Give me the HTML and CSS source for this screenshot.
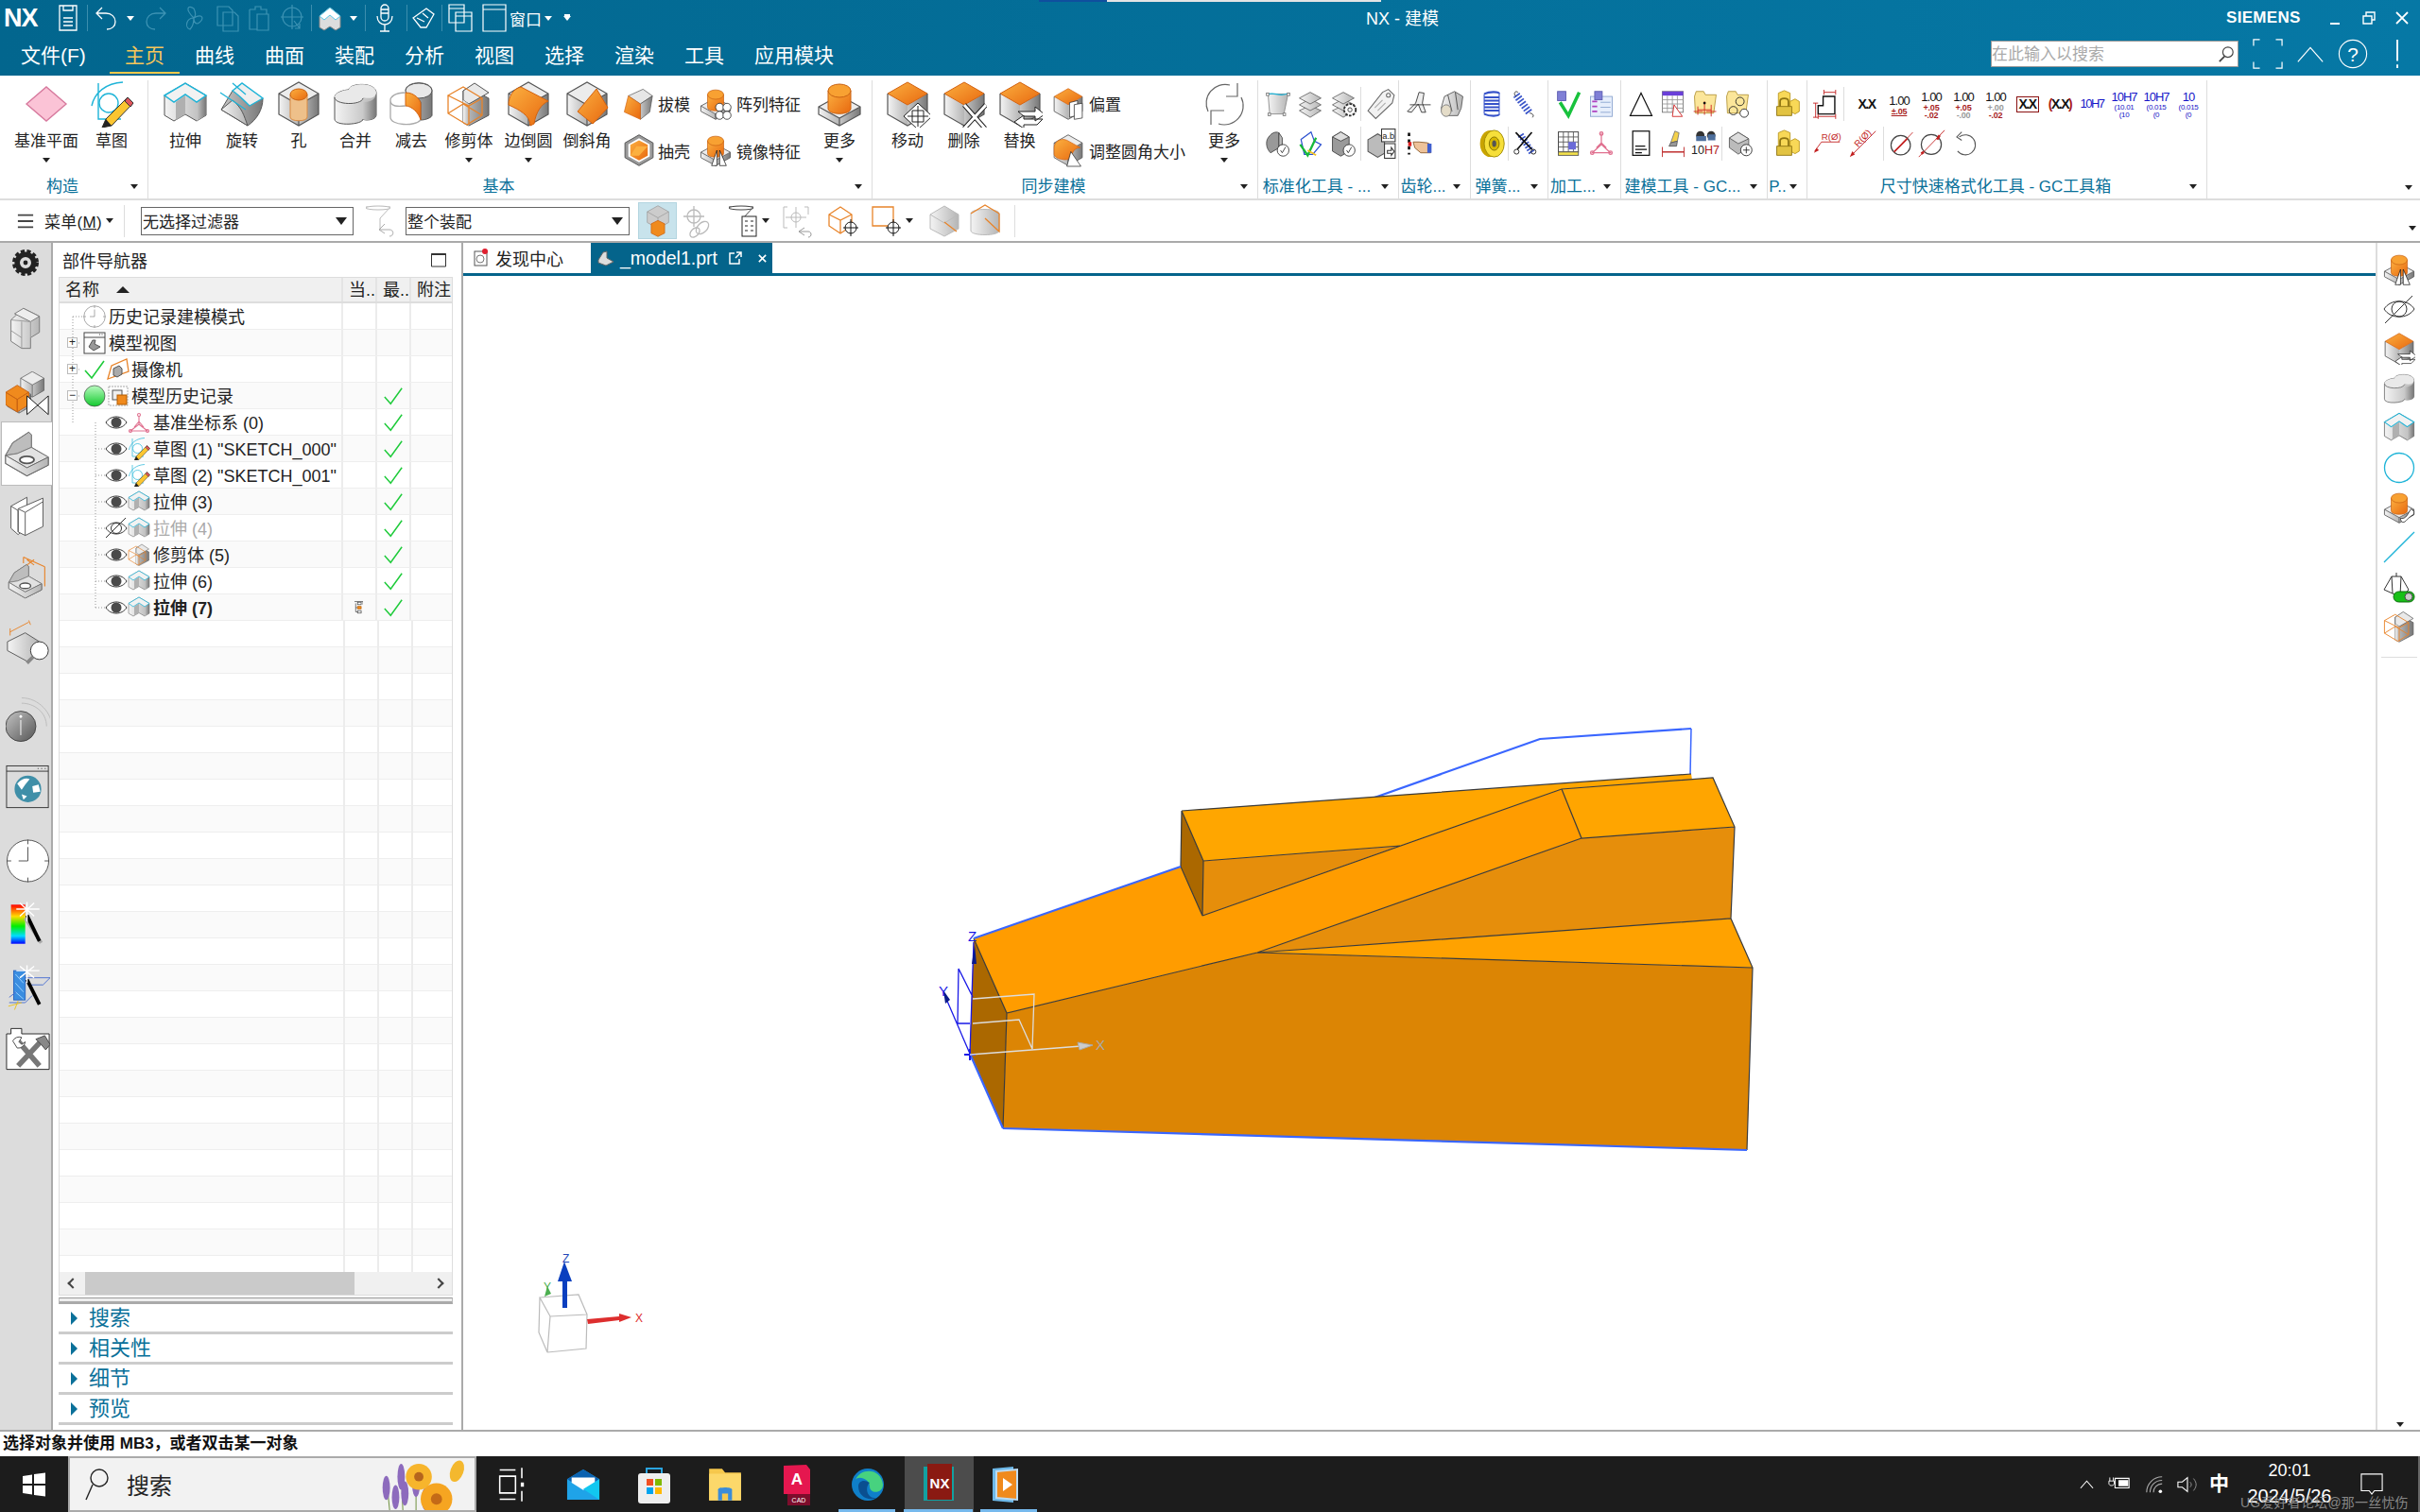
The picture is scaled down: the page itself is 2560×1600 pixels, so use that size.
FILE: index.html
```html
<!DOCTYPE html>
<html lang="zh">
<head>
<meta charset="utf-8">
<title>NX - 建模</title>
<link rel="stylesheet" href="styles.css">
</head>
<body>
<svg class="defs" aria-hidden="true">
<defs>
<linearGradient id="gA" x1="0" x2="1" y1="0" y2="0"><stop offset="0" stop-color="#f4f4f4"/><stop offset="1" stop-color="#b5b5b5"/></linearGradient>
<linearGradient id="gB" x1="0" x2="1" y1="0" y2="0"><stop offset="0" stop-color="#c8c8c8"/><stop offset="1" stop-color="#777"/></linearGradient>
<linearGradient id="gO" x1="0" x2="1" y1="0" y2="1"><stop offset="0" stop-color="#fbb040"/><stop offset="1" stop-color="#e8680f"/></linearGradient>
<linearGradient id="gBall" x1="0" x2="0" y1="0" y2="1"><stop offset="0" stop-color="#b9fbc0"/><stop offset="1" stop-color="#12c92e"/></linearGradient>
<linearGradient id="gInfo" x1="0" x2="1" y1="0" y2="1"><stop offset="0" stop-color="#c4c4c4"/><stop offset="1" stop-color="#555"/></linearGradient>
<linearGradient id="gRain" x1="0" x2="0" y1="0" y2="1"><stop offset="0" stop-color="#f00"/><stop offset=".3" stop-color="#fd0"/><stop offset=".55" stop-color="#0e0"/><stop offset=".8" stop-color="#0df"/><stop offset="1" stop-color="#00f"/></linearGradient>

<symbol id="cube" viewBox="0 0 48 48"><path d="M3 13 24 25V47L3 35z" fill="url(#gA)"/><path d="M45 13 24 25V47L45 35z" fill="url(#gB)"/><path d="M3 13 24 1 45 13 24 25z" fill="#ececec"/><path d="M3 13 24 1 45 13V35L24 47 3 35zM3 13 24 25 45 13M24 25V47" fill="none" stroke="#555" stroke-width="1.2"/></symbol>
<symbol id="ocube" viewBox="0 0 48 48"><path d="M3 13 24 25V47L3 35z" fill="url(#gA)"/><path d="M45 13 24 25V47L45 35z" fill="url(#gB)"/><path d="M3 13 24 1 45 13 24 25z" fill="url(#gO)" stroke="#d4620f"/><path d="M3 13V35L24 47 45 35V13" fill="none" stroke="#555" stroke-width="1.2"/></symbol>
<symbol id="pad" viewBox="0 0 48 48"><path d="M2 27 24 39V47L2 35z" fill="url(#gA)"/><path d="M46 27 24 39V47L46 35z" fill="url(#gB)"/><path d="M2 27 24 15 46 27 24 39z" fill="#ececec"/><path d="M2 27 24 15 46 27V35L24 47 2 35zM2 27 24 39 46 27M24 39V47" fill="none" stroke="#555" stroke-width="1.2"/><path d="M12 10V29C12 36 36 36 36 29V10z" fill="url(#gO)" stroke="#c96212"/><ellipse cx="24" cy="10" rx="12" ry="7" fill="#f8a132" stroke="#c96212"/></symbol>
<symbol id="datum" viewBox="0 0 48 48"><path d="M3 24 24 6 45 24 24 42z" fill="#fbc3d6" stroke="#d77a9e" stroke-width="1.4"/></symbol>
<symbol id="sketch" viewBox="0 0 48 48"><path d="M3 26C6 12 18 2 36 1M10 2V40H34" fill="none" stroke="#1fb4d8" stroke-width="1.4"/><circle cx="21" cy="23" r="10" fill="#fff" stroke="#1fb4d8" stroke-width="1.4"/><path d="M41 17 47 23 24 47 14 49 18 40z" fill="#fbc531" stroke="#333"/><path d="M41 17 47 23 44 27 38 21z" fill="#e0555c" stroke="#333"/><path d="M18 40 14 49 24 47z" fill="#222"/></symbol>
<symbol id="extrude" viewBox="0 0 48 48"><path d="M2 15V36L12 42 24 35 36 42 46 36V15L24 2z" fill="url(#gA)" stroke="#555"/><path d="M36 22 46 15V36L36 42z" fill="url(#gB)"/><path d="M14 22 24 15V35L14 41z" fill="#b0b0b0"/><path d="M2 15 24 2 46 15 36 22 24 14 12 22z" fill="#f2f2f2" stroke="#1fb4d8" stroke-width="1.5"/></symbol>
<symbol id="revolve" viewBox="0 0 48 48"><path d="M2 30 14 10C22 15 38 20 46 18 46 30 40 40 30 47z" fill="url(#gB)" stroke="#555"/><path d="M2 30 30 47C26 36 24 28 14 20z" fill="url(#gA)" stroke="#555"/><path d="M14 10 24 2 46 18 32 26C26 20 20 14 14 10z" fill="#efefef" stroke="#1fb4d8" stroke-width="1.4"/><path d="M1 12 28 30M14 2 28 14" stroke="#1fb4d8" stroke-width="1.3" fill="none"/></symbol>
<symbol id="hole" viewBox="0 0 48 48"><use href="#cube"/><path d="M15 14V38C15 43 33 43 33 38V14z" fill="#eec08a" stroke="#d98a40"/><ellipse cx="24" cy="14" rx="9" ry="6" fill="url(#gO)" stroke="#c96212"/></symbol>
<symbol id="unite" viewBox="0 0 48 48"><path d="M17 9C17 2 45 0 46 12V36C46 41 34 42 32 40 32 46 2 48 2 40V17C2 12 12 9 17 9z" fill="url(#gA)" stroke="#555"/><path d="M32 40V22C44 22 46 16 46 12V36C46 41 34 42 32 40z" fill="url(#gB)"/><path d="M2 17C2 27 32 27 32 17 44 20 46 14 46 12 45 0 17 2 17 9 12 9 2 12 2 17z" fill="#e9e9e9" stroke="none"/><path d="M2 17C2 25 30 26 32 18" fill="none" stroke="#555"/></symbol>
<symbol id="subtract" viewBox="0 0 48 48"><path d="M18 10C18 -1 46 -1 46 10V36C46 38 40 41 34 41V22C30 14 18 12 18 10z" fill="url(#gB)" stroke="#555"/><ellipse cx="32" cy="10" rx="14" ry="8" fill="#e8e8e8" stroke="#555"/><path d="M18 12C28 12 34 20 34 24V41C32 33 24 26 18 26z" fill="url(#gO)" stroke="#d4620f"/><path d="M18 12C6 12 2 17 2 20V38C2 47 28 48 34 41M2 20C2 27 10 27 18 26" fill="none" stroke="#aaa" stroke-width="1.3"/></symbol>
<symbol id="trim" viewBox="0 0 48 48"><path d="M18 10 24 7 45 18V36L24 47 18 44z" fill="url(#gB)" stroke="#555"/><path d="M18 10 30 2 45 12 24 24 18 20z" fill="#e9e9e9" stroke="#555"/><path d="M18 20 24 24V47L18 44z" fill="url(#gA)"/><path d="M2 15 18 6 38 18 24 26zM2 15V34L22 46 38 36V18M24 26V46M2 34 18 24 38 36" fill="none" stroke="#e8842a" stroke-width="1.3"/></symbol>
<symbol id="blend" viewBox="0 0 48 48"><use href="#cube"/><path d="M3 25C3 16 8 8 16 6L45 21C38 24 32 32 30 45L26 47C26 36 14 30 3 25z" fill="url(#gO)" stroke="#d4620f"/></symbol>
<symbol id="chamfer" viewBox="0 0 48 48"><use href="#cube"/><path d="M14 32 34 8 46 28 30 45z" fill="url(#gO)" stroke="#d4620f"/></symbol>
<symbol id="draft" viewBox="0 0 48 48"><path d="M8 12 30 2 44 12 26 24z" fill="#e6e6e6" stroke="#555"/><path d="M26 24 44 12 40 36 26 47z" fill="url(#gB)" stroke="#555"/><path d="M8 12 26 24 26 47 2 36z" fill="url(#gO)" stroke="#d4620f"/></symbol>
<symbol id="shell" viewBox="0 0 48 48"><path d="M24 1 45 13V35L24 47 3 35V13z" fill="#999" stroke="#555" stroke-width="1.4"/><path d="M24 6 40 15V33L24 42 8 33V15z" fill="#fff"/><path d="M24 9 37 16V32L24 39 11 32V16z" fill="url(#gO)"/><path d="M20 18H37L24 32 11 32z" fill="#fbb040"/></symbol>
<symbol id="pattern" viewBox="0 0 48 48"><use href="#pad"/><g fill="#fff" stroke="#111"><circle cx="30" cy="29" r="6"/><circle cx="41" cy="29" r="6"/><circle cx="30" cy="41" r="6"/><circle cx="41" cy="41" r="6"/></g></symbol>
<symbol id="mirror" viewBox="0 0 48 48"><use href="#pad"/><path d="M26 24 26 47H18zM30 24V47H40z" fill="#fff" stroke="#111"/></symbol>
<symbol id="move" viewBox="0 0 48 48"><use href="#ocube"/><path d="M35 23 50 37 35 51 20 37z" fill="#fff" stroke="#222"/><path d="M35 26V48M24 37H46M29 31H41V43H29z" stroke="#222" fill="none"/></symbol>
<symbol id="del" viewBox="0 0 48 48"><use href="#ocube"/><path d="M24 25 46 50M47 25 24 50" stroke="#222" stroke-width="5"/><path d="M24 25 46 50M47 25 24 50" stroke="#fff" stroke-width="3"/></symbol>
<symbol id="replace" viewBox="0 0 48 48"><use href="#ocube"/><path d="M22 32H40V27L50 35 40 42V37H28zM48 40H28V36L18 43 28 50V46H42z" fill="#fff" stroke="#222"/></symbol>
<symbol id="offset" viewBox="0 0 48 48"><use href="#ocube"/><path d="M26 22 38 19V41L26 44z" fill="#fff" stroke="#222"/><path d="M33 25 45 23V45L33 47z" fill="#fff" stroke="#222"/></symbol>
<symbol id="resize" viewBox="0 0 48 48"><use href="#cube"/><path d="M3 20C3 12 12 5 22 9L42 20C34 20 30 26 28 36 22 40 4 38 3 30z" fill="url(#gO)" stroke="#d4620f"/><path d="M28 26 43 48H22z" fill="#fff" stroke="#222"/></symbol>
<symbol id="sync" viewBox="0 0 48 48"><path d="M7 32A20 20 0 0 1 30 4M42 17A20 20 0 0 1 18 45" fill="none" stroke="#666" stroke-width="1.2"/><path d="M38 2V16H26M10 46V31H24" fill="none" stroke="#666" stroke-width="1.2"/></symbol>
<symbol id="filt" viewBox="0 0 34 34"><path d="M2 2H28L17 14V26" fill="none" stroke="#bbb"/><ellipse cx="15" cy="3" rx="13" ry="2" fill="#fff" stroke="#bbb"/><path d="M22 20 16 26 22 30M16 26H27C32 26 32 33 27 33" fill="none" stroke="#aaa"/></symbol>

<symbol id="surf" viewBox="0 0 34 34"><path d="M5 5H29L24 29 7 29z" fill="url(#gA)" stroke="#888"/><path d="M4 6C12 1 18 10 30 4" fill="none" stroke="#1fb4d8" stroke-width="1.4"/><g fill="#fff" stroke="#777"><rect x="3" y="4" width="3" height="3"/><rect x="28" y="4" width="3" height="3"/><rect x="5" y="28" width="3" height="3"/><rect x="23" y="28" width="3" height="3"/></g></symbol>
<symbol id="layers" viewBox="0 0 34 34"><g fill="url(#gA)" stroke="#666"><path d="M17 19 30 25 17 33 4 25z"/><path d="M17 11 30 18 17 25 4 18z"/><path d="M17 3 30 10 17 17 4 10z"/></g></symbol>
<symbol id="lgear" viewBox="0 0 34 34"><use href="#layers"/><circle cx="25" cy="24" r="7" fill="#fff" stroke="#333" stroke-width="2.2" stroke-dasharray="3 1.5"/><circle cx="25" cy="24" r="2.5" fill="#fff" stroke="#333"/></symbol>
<symbol id="tag" viewBox="0 0 34 34"><path d="M24 2 30 8 28 16 11 32 3 24 18 5z" fill="#f2f2f2" stroke="#666"/><circle cx="24" cy="8" r="2" fill="#fff" stroke="#666"/><path d="M10 21 18 13M13 24 21 16" stroke="#aaa"/></symbol>
<symbol id="pcheck" viewBox="0 0 34 34"><path d="M4 12C8 4 14 2 18 4V22L8 28C4 24 2 18 4 12z" fill="#999" stroke="#444"/><path d="M18 4 22 10V20L18 22z" fill="#bbb" stroke="#444"/><circle cx="23" cy="25" r="7" fill="#fff" stroke="#333"/><path d="M20 25 22 28 26 21" fill="none" stroke="#333"/></symbol>
<symbol id="flag3" viewBox="0 0 34 34"><path d="M6 12 18 3 22 14 30 18 20 30 10 30z" fill="#fff" stroke="#2a4fcf" stroke-width="1.4"/><path d="M5 18 14 31 24 10" fill="none" stroke="#17b93a" stroke-width="2.6"/><path d="M14 25 24 31" stroke="#f0c020" stroke-width="2"/></symbol>
<symbol id="ccheck" viewBox="0 0 34 34"><path d="M4 9 14 3 24 9V26L14 32 4 26z" fill="#9a9a9a" stroke="#444"/><path d="M4 9 14 14 24 9 14 3z" fill="#ddd" stroke="#444"/><circle cx="24" cy="25" r="7" fill="#fff" stroke="#333"/><path d="M21 25 23 28 27 21" fill="none" stroke="#333"/></symbol>
<symbol id="abdoc" viewBox="0 0 34 34"><path d="M3 13 13 7 20 11V27L13 31 3 25z" fill="#bbb" stroke="#555"/><rect x="17" y="2" width="14" height="13" fill="#fff" stroke="#333"/><text x="24" y="12" font-size="9" text-anchor="middle" fill="#222" font-family="Liberation Sans">a.b</text><rect x="20" y="17" width="11" height="15" fill="#fff" stroke="#333"/><path d="M23 24H27V21L30 25 27 29V27H23z" fill="#fff" stroke="#333"/></symbol>
<symbol id="gear1" viewBox="0 0 34 34"><path d="M2 26 12 16 16 3 22 4 20 16 24 27H19L15 17 7 27z" fill="#eee" stroke="#333"/><path d="M5 18H30" stroke="#333"/></symbol>
<symbol id="gear2" viewBox="0 0 34 34"><path d="M8 8 20 2 30 8 28 22 24 31H8L4 22z" fill="url(#gA)" stroke="#555"/><path d="M12 6 17 26M21 3 24 24" stroke="#444"/><ellipse cx="10" cy="25" rx="6" ry="7" fill="#e4dcc8" stroke="#777"/></symbol>
<symbol id="hand" viewBox="0 0 34 34"><path d="M4 4V30" stroke="#111" stroke-width="3" stroke-dasharray="4 4"/><path d="M9 15 H16 L26 16 30 18V28H18L11 22z" fill="#eec39a" stroke="#8a5a2a"/><rect x="26" y="17" width="5" height="11" fill="#3f5fcf"/><rect x="3" y="15" width="4" height="5" fill="#e02020"/></symbol>
<symbol id="spring1" viewBox="0 0 34 34"><g fill="none" stroke="#3551c9" stroke-width="2.4"><path d="M8 5C14 2 26 2 26 5M8 9H26M8 13H26M8 17H26M8 21H26M8 25H26M8 29C14 32 26 32 26 29"/><path d="M8 5V29M26 5V29" stroke-width="1.2"/></g></symbol>
<symbol id="spring2" viewBox="0 0 34 34"><path d="M8 6 24 28" fill="none" stroke="#3a55c9" stroke-width="9" stroke-dasharray="2 2"/><path d="M10 3C6 0 4 6 8 8M24 28C28 28 30 32 27 33" fill="none" stroke="#333"/></symbol>
<symbol id="washer" viewBox="0 0 34 34"><ellipse cx="15" cy="17" rx="12" ry="16" fill="#c9a400"/><ellipse cx="20" cy="17" rx="12" ry="16" fill="#f6df3a" stroke="#9b8500"/><ellipse cx="20" cy="17" rx="6" ry="8" fill="#d7b800" stroke="#7b6a00"/><ellipse cx="20" cy="17" rx="2.5" ry="4" fill="#555"/></symbol>
<symbol id="scissor" viewBox="0 0 34 34"><path d="M10 6 24 28" fill="none" stroke="#3a55c9" stroke-width="8" stroke-dasharray="2 2"/><path d="M4 3 24 24M24 3 6 24" stroke="#111" stroke-width="2"/><circle cx="5" cy="27" r="3" fill="none" stroke="#111"/><circle cx="26" cy="27" r="3" fill="none" stroke="#111"/></symbol>
<symbol id="plugv" viewBox="0 0 34 34"><rect x="3" y="2" width="10" height="11" fill="#7f7fd6" stroke="#5a5ab0"/><path d="M6 15 16 31 29 3" fill="none" stroke="#18c23d" stroke-width="4"/></symbol>
<symbol id="plugl" viewBox="0 0 34 34"><rect x="4" y="8" width="26" height="24" fill="#e6eefb" stroke="#8aa4cf"/><rect x="9" y="2" width="9" height="10" fill="#7f7fd6" stroke="#5a5ab0"/><path d="M6 14H12M6 20H12M6 26H12" stroke="#b040c0" stroke-width="2"/><path d="M16 15H28M16 21H28M16 27H28" stroke="#8aa4cf"/></symbol>
<symbol id="gridp" viewBox="0 0 34 34"><rect x="4" y="3" width="24" height="24" fill="#fff" stroke="#333"/><path d="M4 9H28M4 15H28M4 21H28M10 3V27M16 3V27M22 3V27" stroke="#555"/><rect x="4" y="27" width="24" height="4" fill="#f4e24b" stroke="#555"/><rect x="16" y="15" width="9" height="9" fill="#6b6bd8"/></symbol>
<symbol id="csysp" viewBox="0 0 34 34"><g fill="none" stroke="#e0708f" stroke-width="1.4"><path d="M17 4V18L6 28H28L17 18M11 22 17 16 23 22"/><circle cx="17" cy="5" r="2"/><circle cx="6" cy="28" r="2"/><circle cx="28" cy="28" r="2"/></g></symbol>
<symbol id="tri" viewBox="0 0 34 34"><path d="M17 4 30 31H4z" fill="#fff" stroke="#111" stroke-width="1.4"/></symbol>
<symbol id="table" viewBox="0 0 34 34"><rect x="4" y="2" width="25" height="25" fill="#fff" stroke="#777"/><rect x="4" y="2" width="25" height="5" fill="#6a3fd8"/><path d="M4 12H29M4 17H29M4 22H29M10 7V27M16 7V27M22 7V27" stroke="#999"/><path d="M18 18 28 32H16z" fill="#fff" stroke="#d02020"/></symbol>
<symbol id="foldp" viewBox="0 0 34 34"><path d="M4 8 6 2H15L17 6H30L27 28H5z" fill="#fbe69a" stroke="#b3953a"/><path d="M8 24H24M16 14V30M24 18V32M18 26H30M8 20V30M3 26H14" stroke="#d02020"/><circle cx="16" cy="16" r="1.6" fill="#111"/></symbol>
<symbol id="foldc" viewBox="0 0 34 34"><path d="M4 8 6 2H15L17 6H30L27 28H5z" fill="#fbe69a" stroke="#b3953a"/><circle cx="12" cy="25" r="5" fill="none" stroke="#222"/><circle cx="25" cy="28" r="5" fill="#fff" stroke="#222"/><circle cx="20" cy="14" r="5" fill="none" stroke="#222"/></symbol>
<symbol id="doc" viewBox="0 0 34 34"><rect x="7" y="2" width="20" height="29" fill="#fff" stroke="#111" stroke-width="1.4"/><path d="M10 20H22M10 24H24M10 28H18" stroke="#111" stroke-width="1.4"/></symbol>
<symbol id="brush" viewBox="0 0 34 34"><path d="M19 2 24 4 22 14 14 16z" fill="#f4d14a" stroke="#777"/><path d="M14 16 22 14 21 20 12 20z" fill="#999" stroke="#555"/><path d="M4 27H30" stroke="#b22" stroke-width="1.6"/><path d="M4 21V33M30 21V33" stroke="#b22"/></symbol>
<symbol id="bino" viewBox="0 0 34 34"><circle cx="11" cy="7" r="5" fill="#333"/><circle cx="24" cy="7" r="5" fill="#333"/><path d="M6 8H18V14H6zM20 6H29V13H20z" fill="#4d6f9d"/><text x="0" y="30" font-size="15" font-family="Liberation Sans" fill="#222" textLength="34" lengthAdjust="spacingAndGlyphs">10<tspan fill="#b02020">H7</tspan></text></symbol>
<symbol id="cplus" viewBox="0 0 34 34"><path d="M4 10 15 3 28 11V22L15 30 4 22z" fill="#bbb" stroke="#555"/><path d="M4 10 15 17 28 11 15 3z" fill="#ddd" stroke="#555"/><circle cx="25" cy="25" r="7" fill="#fff" stroke="#222"/><path d="M25 21V29M21 25H29" stroke="#222"/></symbol>
<symbol id="lock" viewBox="0 0 34 34"><path d="M6 4 13 1 20 4V20L13 24 6 20z" fill="#f8d857" stroke="#b8961e"/><path d="M20 14 26 11 31 14V26L26 29 20 26z" fill="#f8d857" stroke="#b8961e"/><path d="M4 20H22V31H4z" fill="#e2c342" stroke="#8e7412"/><path d="M8 20V14C8 9 18 9 18 14V20" fill="none" stroke="#8e7412" stroke-width="2"/></symbol>
<symbol id="dimstep" viewBox="0 0 34 34"><path d="M12 8H26V29H6V19H12z" fill="#fff" stroke="#111" stroke-width="1.6"/><path d="M13 3H27M13 0V6M27 0V6M3 16V33M0 16H6M0 33H6M6 32H27M6 29V35M27 29V35" stroke="#c21f1f"/></symbol>
<symbol id="rdim" viewBox="0 0 34 34"><text x="10" y="13" font-size="11" fill="#c21f1f" font-family="Liberation Sans">R(Ø)</text><path d="M10 15H32M10 15 2 26" stroke="#c21f1f" fill="none"/><path d="M1 28 7 25 4 22z" fill="#c21f1f"/></symbol>
<symbol id="rdim2" viewBox="0 0 34 34"><path d="M32 2 2 32" stroke="#c21f1f"/><text x="9" y="21" font-size="11" fill="#c21f1f" font-family="Liberation Sans" transform="rotate(-48 11 19)">R(Ø)</text><path d="M1 33 7 30 4 26z" fill="#c21f1f"/></symbol>
<symbol id="dia1" viewBox="0 0 34 34"><circle cx="16" cy="19" r="12" fill="none" stroke="#444" stroke-width="1.4"/><path d="M31 3 8 27" stroke="#c21f1f"/><path d="M24 11 8 27" stroke="#c21f1f" stroke-width="2"/></symbol>
<symbol id="dia2" viewBox="0 0 34 34"><circle cx="17" cy="18" r="12" fill="none" stroke="#444" stroke-width="1.4"/><path d="M33 1 2 33" stroke="#c21f1f"/><path d="M27 7 24 12M8 27 5 29" stroke="#c21f1f" stroke-width="3"/></symbol>
<symbol id="undoc" viewBox="0 0 34 34"><path d="M10 7A12 12 0 1 1 8 24" fill="none" stroke="#555" stroke-width="1.2" transform="translate(2 2)"/><path d="M15 3 9 9 15 13" fill="none" stroke="#555" stroke-width="1.2"/></symbol>

<symbol id="eye" viewBox="0 0 24 24"><path d="M1 12C6 4 18 4 23 12 18 20 6 20 1 12z" fill="#fff" stroke="#333"/><circle cx="12" cy="12" r="5.5" fill="#4a4a4a"/></symbol>
<symbol id="eyeoff" viewBox="0 0 24 24"><path d="M1 12C6 4 18 4 23 12 18 20 6 20 1 12z" fill="#fff" stroke="#333"/><circle cx="12" cy="12" r="5.5" fill="none" stroke="#333"/><path d="M1 22 22 1" stroke="#333"/></symbol>
<symbol id="check" viewBox="0 0 24 24"><path d="M2 13 9 21 22 3" fill="none" stroke="#1ecb3a" stroke-width="1.6"/></symbol>
<symbol id="clock" viewBox="0 0 48 48"><circle cx="24" cy="24" r="22.5" fill="#fff" stroke="#555"/><path d="M24 1V6M24 42V47M1 24H6M42 24H47M24 9V24H14" fill="none" stroke="#555"/></symbol>
<symbol id="viewi" viewBox="0 0 24 24"><rect x="1" y="1" width="22" height="22" fill="#fff" stroke="#444"/><path d="M1 6H23" stroke="#444"/><path d="M17 3H18M19.500 3H20.500" stroke="#444"/><path d="M6 16 10 9 13 9 12 13 18 16 11 20z" fill="#999" stroke="#555"/></symbol>
<symbol id="cam" viewBox="0 0 24 24"><path d="M1 22 5 8 21 1 23 14z" fill="#fff" stroke="#e8842a" stroke-width="1.3"/><path d="M7 11 13 8 16 11V17L11 20 7 18z" fill="#aaa" stroke="#555"/></symbol>
<symbol id="ball" viewBox="0 0 24 24"><circle cx="12" cy="12" r="11" fill="url(#gBall)" stroke="#333" stroke-width=".6"/></symbol>
<symbol id="hist" viewBox="0 0 24 24"><rect x="2" y="2" width="20" height="20" fill="#fff" stroke="#aaa" stroke-dasharray="2 1"/><rect x="6" y="6" width="10" height="10" fill="#eee" stroke="#555"/><rect x="11" y="11" width="10" height="10" fill="#f08a1d" stroke="#b35c00"/></symbol>
<symbol id="csys" viewBox="0 0 24 24"><g fill="none" stroke="#e0708f" stroke-width="1.1"><path d="M12 5V14L3 21H21L12 14M7 17 12 11 17 17"/><circle cx="12" cy="4" r="1.500"/><circle cx="3" cy="21" r="1.500"/><circle cx="21" cy="21" r="1.500"/></g></symbol>
<symbol id="tsk" viewBox="0 0 14 24"><path d="M0 2H14V7M2 5V19H5M5 12H2" fill="none" stroke="#333"/><rect x="5" y="3" width="6" height="4" fill="#fff" stroke="#333"/><rect x="5" y="10" width="6" height="4" fill="#f08a1d" stroke="#b35c00"/><rect x="5" y="17" width="6" height="4" fill="#fff" stroke="#333"/></symbol>

<symbol id="gearl" viewBox="0 0 50 50"><circle cx="25" cy="25" r="11" fill="none" stroke="#222" stroke-width="7"/><circle cx="25" cy="25" r="15" fill="none" stroke="#222" stroke-width="5" stroke-dasharray="5 3"/><circle cx="25" cy="25" r="3" fill="#222"/></symbol>
<symbol id="blocks" viewBox="0 0 50 50"><path d="M20 3 38 12V30L28 36V48L18 48 6 40V16z" fill="url(#gA)" stroke="#777"/><path d="M20 3 38 12 28 18 10 9z" fill="#eee" stroke="#777"/><path d="M28 18V36M28 18 6 16M6 28 18 36M18 18V48" fill="none" stroke="#999"/></symbol>
<symbol id="assem" viewBox="0 0 50 50"><use href="#cube" x="15" y="-2" width="30" height="30"/><use href="#cube" x="0" y="16" width="30" height="30"/><path d="M0 22 13 14 26 22 13 30z" fill="#f08a1d" stroke="#c96212"/><path d="M0 22 13 30V44L0 36zM26 22 13 30V44L26 36z" fill="#f08a1d" stroke="#c96212"/><path d="M24 26 48 47V26L24 47z" fill="#fff" stroke="#111"/></symbol>
<symbol id="bracket" viewBox="0 0 50 52"><path d="M1 28 9 14 27 2 30 5V19L49 30V39L25 51 1 37z" fill="#c8c8c8" stroke="#666" stroke-width="1.200"/><path d="M1 28 9 14 27 2 30 5V19L14 26z" fill="#bdbdbd" stroke="#777"/><path d="M1 28 14 26 30 19 49 30 25 42z" fill="#e2e2e2" stroke="#777"/><path d="M1 28 25 42 49 30V39L25 51 1 37z" fill="url(#gA)" stroke="#666"/><ellipse cx="25" cy="33" rx="8" ry="4" fill="#fff" stroke="#555" stroke-width="2"/></symbol>
<symbol id="books" viewBox="0 0 50 50"><path d="M6 15 24 5V38L14 47 6 40z" fill="#fff" stroke="#555"/><path d="M14 18 42 6V38L22 48 14 44z" fill="#fff" stroke="#555"/><path d="M6 15 14 20V44M14 18 22 22V48M22 22 42 10" fill="none" stroke="#555"/></symbol>
<symbol id="bracketd" viewBox="0 0 50 50"><use href="#bracket" x="2" y="8" width="40" height="40"/><path d="M16 1 40 12M40 12V34M16 1V8M20 4 28 10M28 4 20 10" fill="none" stroke="#e8842a" stroke-width="1.2" transform="translate(4 0)"/></symbol>
<symbol id="brmag" viewBox="0 0 50 50"><path d="M2 24 22 14 38 24V34L24 46 2 34z" fill="url(#gA)" stroke="#555"/><path d="M5 13 26 2M5 9V17M26 0 28 5" stroke="#e8842a" fill="none"/><circle cx="38" cy="34" r="10" fill="#fff" stroke="#333"/><path d="M31 41 24 48" stroke="#888" stroke-width="4"/></symbol>
<symbol id="info" viewBox="0 0 50 50"><circle cx="17" cy="32" r="17" fill="url(#gInfo)" stroke="#444"/><circle cx="17" cy="21" r="1.500" fill="#fff"/><path d="M17 25V42" stroke="#fff"/><path d="M18 6C32 6 46 16 46 32M18 0C38 0 52 18 52 32" fill="none" stroke="#bbb"/></symbol>
<symbol id="globe" viewBox="0 0 50 50"><rect x="1" y="1" width="47" height="47" fill="none" stroke="#333"/><path d="M1 7H48M36 4H37M40 4H41M44 4H45" stroke="#333"/><circle cx="25" cy="27" r="15" fill="#3f8fa8"/><path d="M13 21C18 15 24 14 27 16L22 22 18 28zM30 24 37 22 39 30 31 31zM18 33 24 35 20 39z" fill="#fff"/></symbol>
<symbol id="rainbow" viewBox="0 0 50 50"><rect x="6" y="3" width="16" height="44" fill="url(#gRain)"/><path d="M22 18 40 46" stroke="#aaa" stroke-width="4"/><path d="M24 15 38 44" stroke="#000" stroke-width="4"/><path d="M12 8H38M24 0V22M16 1 32 16M32 1 16 16" stroke="#fff" stroke-width="1.5"/></symbol>
<symbol id="wand" viewBox="0 0 50 50"><rect x="9" y="6" width="13" height="33" fill="#3a8de0" stroke="#2a66c0"/><path d="M11 10 20 20M11 20 20 30M11 30 20 38" stroke="#9fd4ff"/><path d="M22 14H50L42 22H26M4 36 12 30M4 42H22L30 34" fill="none" stroke="#4a6fd0"/><path d="M3 46 18 42M10 50 14 40" stroke="#e8c020"/><path d="M24 16 38 44" stroke="#000" stroke-width="4"/><path d="M12 6H38M24 0V20M16 1 32 14M32 1 16 14" stroke="#fff" stroke-width="1.5"/></symbol>
<symbol id="tools" viewBox="0 0 50 50"><path d="M1 48V8H6V2H18V8H49V48z" fill="#fff" stroke="#222"/><path d="M12 14 38 44M42 14 14 44" stroke="#777" stroke-width="6"/><path d="M8 16A8 8 0 0 1 18 12L15 17 18 20 22 17A8 8 0 0 1 13 24z" fill="#fff" stroke="#444"/><path d="M34 14 44 10 50 20 45 26 40 20z" fill="#888" stroke="#444"/></symbol>
<symbol id="orcube2" viewBox="0 0 48 48"><path d="M8 10 24 1 40 10V26L24 35 8 26z" fill="#ccc" stroke="#999"/><path d="M8 10 24 19 40 10M24 19V35" fill="none" stroke="#999"/><path d="M14 28 24 23 34 28V42L24 47 14 42z" fill="#f08a1d" stroke="#c96212"/></symbol>
</defs>
</svg>

<div class="app">
  <header class="top">
    <div class="top-strip"><i class="s1"></i><i class="s2"></i></div>
    <div class="title-row">
      <span class="nx">NX</span>
      <svg class="q q1" viewBox="0 0 24 28"><path d="M3 1H21V27H3zM7 1H17V6H7zM7 14H17M7 18H17M7 22H17" fill="none" stroke="#fff" stroke-width="1.3"/></svg>
      <i class="qs"></i>
      <svg class="q q2" viewBox="0 0 24 28"><path d="M8 3 2 9 8 15M2 9H12C18 9 22 13 22 18S18 26 13 26" fill="none" stroke="#fff" stroke-width="1.3"/></svg>
      <span class="car q3"></span>
      <svg class="q q4" viewBox="0 0 24 28"><path d="M16 3 22 9 16 15M22 9H12C6 9 2 13 2 18S6 26 11 26" fill="none" stroke="#3d93b4" stroke-width="1.3"/></svg>
      <svg class="q q5" viewBox="0 0 24 28"><path d="M12 14C2 4 6 0 12 4 14 8 14 12 12 14ZM12 14C22 8 24 16 16 20 12 20 12 16 12 14ZM12 14C4 14 2 24 8 26 12 22 12 18 12 14Z" fill="none" stroke="#3d93b4" stroke-width="1.2"/></svg>
      <svg class="q q6" viewBox="0 0 24 28"><path d="M2 2H14L18 6V22H2zM8 8H20L24 12V28H8z" fill="none" stroke="#3d93b4" stroke-width="1.2"/></svg>
      <svg class="q q7" viewBox="0 0 24 28"><path d="M2 5H8V2H14V5H20V10M2 5V26H10M10 10H22V27H10z" fill="none" stroke="#3d93b4" stroke-width="1.2"/></svg>
      <svg class="q q8" viewBox="0 0 24 28"><circle cx="12" cy="13" r="10" fill="none" stroke="#3d93b4" stroke-width="1.2"/><path d="M12 0V26M0 13H24M14 17 20 25M20 20V25H15" fill="none" stroke="#3d93b4" stroke-width="1.2"/></svg>
      <i class="qs qs2"></i>
      <svg class="q q9" viewBox="0 0 26 28"><path d="M2 12 13 3 24 12V24L19 27 13 23 7 27 2 24z" fill="#ddd" stroke="#888"/><path d="M2 12 13 3 24 12 19 16 13 11 7 16z" fill="#fff" stroke="#5ac8e8"/></svg>
      <span class="car q10"></span>
      <i class="qs qs3"></i>
      <svg class="q q11" viewBox="0 0 24 30"><rect x="8" y="1" width="8" height="17" rx="4" fill="none" stroke="#fff" stroke-width="1.3"/><path d="M8 6H16M8 10H16M4 13C4 25 20 25 20 13M12 22V29M7 29H17" fill="none" stroke="#fff" stroke-width="1.3"/></svg>
      <i class="qs qs4"></i>
      <svg class="q q12" viewBox="0 0 26 28"><path d="M2 14 16 4 24 10 16 24 10 24zM6 14 14 18M12 9 18 14" fill="none" stroke="#fff" stroke-width="1.3"/></svg>
      <i class="qs qs5"></i>
      <svg class="q q13" viewBox="0 0 26 30"><path d="M1 1H17V20H1zM1 5H17M8 9H25V29H8zM8 13H25" fill="#046f98" stroke="#fff" stroke-width="1.2"/></svg>
      <svg class="q q14" viewBox="0 0 26 30"><path d="M1 1H25V29H1zM1 6H25" fill="none" stroke="#fff" stroke-width="1.2"/></svg>
      <span class="qtext">窗口</span>
      <span class="car q15"></span>
      <span class="car car-line q16"></span>
      <span class="apptitle">NX - 建模</span>
      <span class="siemens">SIEMENS</span>
      <span class="winbtns">
        <svg viewBox="0 0 16 16"><path d="M2 14H12" stroke="#fff" stroke-width="2"/></svg>
        <svg viewBox="0 0 16 16"><path d="M2 6H11V14H2zM5 6V2H14V10H11" fill="none" stroke="#fff" stroke-width="1.400"/></svg>
        <svg viewBox="0 0 16 16"><path d="M2 2 14 14M14 2 2 14" stroke="#fff" stroke-width="1.800"/></svg>
      </span>
    </div>
    <nav class="menu-row">
      <a class="mi file">文件(F)</a>
      <a class="mi active">主页</a>
      <a class="mi">曲线</a><a class="mi">曲面</a><a class="mi">装配</a><a class="mi">分析</a><a class="mi">视图</a><a class="mi">选择</a><a class="mi">渲染</a><a class="mi">工具</a><a class="mi">应用模块</a>
      <div class="search">
        <span class="ph">在此输入以搜索</span>
        <svg class="mag" viewBox="0 0 20 20"><circle cx="12" cy="8" r="6" fill="none" stroke="#444" stroke-width="1.300"/><path d="M8 13 2 19" stroke="#444" stroke-width="2"/></svg>
      </div>
      <svg class="tb b1" viewBox="0 0 34 34"><path d="M1 8V1H8M26 1H33V8M33 26V33H26M8 33H1V26" fill="none" stroke="#fff" stroke-width="1.300"/></svg>
      <svg class="tb b2" viewBox="0 0 34 34"><path d="M3 26 17 10 31 26" fill="none" stroke="#fff" stroke-width="1.300"/></svg>
      <svg class="tb b3" viewBox="0 0 34 34"><circle cx="17" cy="17" r="15.500" fill="none" stroke="#fff" stroke-width="1.200"/><text x="17" y="25" font-size="22" text-anchor="middle" fill="#fff" font-family="Liberation Sans">?</text></svg>
      <svg class="tb b4" viewBox="0 0 34 34"><path d="M17 1V25M17 29V33" stroke="#fff" stroke-width="2"/></svg>
    </nav>
  </header>

  <section class="ribbon">
    <div class="grp g1">
      <div class="body pl14">
        <div class="lb w70"><svg class="li"><use href="#datum"/></svg><span>基准平面</span><b class="car dk"></b></div>
        <div class="lb w68"><svg class="li"><use href="#sketch"/></svg><span>草图</span></div>
      </div>
      <div class="foot">构造<b class="car dk fa"></b></div>
    </div>
    <div class="grp g2">
      <div class="body pl9">
        <div class="lb"><svg class="li"><use href="#extrude"/></svg><span>拉伸</span></div>
        <div class="lb"><svg class="li"><use href="#revolve"/></svg><span>旋转</span></div>
        <div class="lb"><svg class="li"><use href="#hole"/></svg><span>孔</span></div>
        <div class="lb"><svg class="li"><use href="#unite"/></svg><span>合并</span></div>
        <div class="lb w58"><svg class="li"><use href="#subtract"/></svg><span>减去</span></div>
        <div class="lb w64"><svg class="li"><use href="#trim"/></svg><span>修剪体</span><b class="car dk"></b></div>
        <div class="lb w62"><svg class="li"><use href="#blend"/></svg><span>边倒圆</span><b class="car dk"></b></div>
        <div class="lb w62"><svg class="li"><use href="#chamfer"/></svg><span>倒斜角</span></div>
        <div class="sc w81 ml7">
          <div class="si"><svg class="mi32"><use href="#draft"/></svg><span>拔模</span></div>
          <div class="si"><svg class="mi32"><use href="#shell"/></svg><span>抽壳</span></div>
        </div>
        <div class="sc w118">
          <div class="si"><svg class="mi32"><use href="#pattern"/></svg><span>阵列特征</span></div>
          <div class="si"><svg class="mi32"><use href="#mirror"/></svg><span>镜像特征</span></div>
        </div>
        <div class="lb"><svg class="li"><use href="#pad"/></svg><span>更多</span><b class="car dk"></b></div>
      </div>
      <div class="foot">基本<b class="car dk fa"></b></div>
    </div>
    <div class="grp g3">
      <div class="body pl7">
        <div class="lb"><svg class="li ov"><use href="#move"/></svg><span>移动</span></div>
        <div class="lb w59"><svg class="li ov"><use href="#del"/></svg><span>删除</span></div>
        <div class="lb w59"><svg class="li ov"><use href="#replace"/></svg><span>替换</span></div>
        <div class="sc w147 ml5">
          <div class="si"><svg class="mi32"><use href="#offset"/></svg><span>偏置</span></div>
          <div class="si"><svg class="mi32"><use href="#resize"/></svg><span>调整圆角大小</span></div>
        </div>
        <div class="lb w70"><svg class="li"><use href="#sync"/></svg><span>更多</span><b class="car dk"></b></div>
      </div>
      <div class="foot">同步建模<b class="car dk fa"></b></div>
    </div>
    <div class="grp g4">
      <div class="sg c-std">
        <svg><use href="#surf"/></svg><svg><use href="#layers"/></svg><svg><use href="#lgear"/></svg><svg class="sl"><use href="#tag"/></svg>
        <svg><use href="#pcheck"/></svg><svg><use href="#flag3"/></svg><svg><use href="#ccheck"/></svg><svg class="sl"><use href="#abdoc"/></svg>
      </div>
      <div class="foot">标准化工具 - ...<b class="car dk fa"></b></div>
    </div>
    <div class="grp g5">
      <div class="sg c2"><svg><use href="#gear1"/></svg><svg><use href="#gear2"/></svg><svg><use href="#hand"/></svg></div>
      <div class="foot">齿轮...<b class="car dk fa"></b></div>
    </div>
    <div class="grp g6">
      <div class="sg c2"><svg><use href="#spring1"/></svg><svg><use href="#spring2"/></svg><svg><use href="#washer"/></svg><svg class="sl"><use href="#scissor"/></svg></div>
      <div class="foot">弹簧...<b class="car dk fa"></b></div>
    </div>
    <div class="grp g7">
      <div class="sg c2"><svg><use href="#plugv"/></svg><svg><use href="#plugl"/></svg><svg><use href="#gridp"/></svg><svg><use href="#csysp"/></svg></div>
      <div class="foot">加工...<b class="car dk fa"></b></div>
    </div>
    <div class="grp g8">
      <div class="sg c4">
        <svg><use href="#tri"/></svg><svg><use href="#table"/></svg><svg><use href="#foldp"/></svg><svg><use href="#foldc"/></svg>
        <svg><use href="#doc"/></svg><svg><use href="#brush"/></svg><svg><use href="#bino"/></svg><svg class="sl"><use href="#cplus"/></svg>
      </div>
      <div class="foot">建模工具 - GC...<b class="car dk fa"></b></div>
    </div>
    <div class="grp g9">
      <div class="sg c1"><svg><use href="#lock"/></svg><svg><use href="#lock"/></svg></div>
      <div class="foot clip">P..<b class="car dk fa"></b></div>
    </div>
    <div class="grp g10">
      <div class="sg c-dim">
        <svg><use href="#dimstep"/></svg>
        <div class="dm xx sl">X.X</div>
        <div class="dm"><b>1.00</b><i class="r u">±.05</i></div>
        <div class="dm"><b>1.00</b><i class="r">+.05</i><i class="r">-.02</i></div>
        <div class="dm"><b>1.00</b><i class="r">+.05</i><i class="g">-.00</i></div>
        <div class="dm"><b>1.00</b><i class="g">+.00</i><i class="r">-.02</i></div>
        <div class="dm xx"><span class="boxed">X.X</span></div>
        <div class="dm xx"><span><em>(</em>X.X<em>)</em></span></div>
        <div class="dm bl one">10H7</div>
        <div class="dm bl"><b>10H7</b><i>(10.01</i><i>(10</i></div>
        <div class="dm bl"><b>10H7</b><i>(0.015</i><i>(0</i></div>
        <div class="dm bl"><b>10</b><i>(0.015</i><i>(0</i></div>
        <svg><use href="#rdim"/></svg>
        <svg><use href="#rdim2"/></svg>
        <svg class="sl"><use href="#dia1"/></svg>
        <svg><use href="#dia2"/></svg>
        <svg><use href="#undoc"/></svg>
      </div>
      <div class="foot">尺寸快速格式化工具 - GC工具箱<b class="car dk fa"></b></div>
    </div>
    <b class="car dk ribbon-end"></b>
  </section>

  <section class="qbar">
    <svg class="burger" viewBox="0 0 20 20"><path d="M1 3H19M1 10H19M1 17H19" stroke="#444" stroke-width="2"/></svg>
    <span class="qlabel">菜单(<u>M</u>)</span>
    <b class="car dk"></b>
    <i class="vsep"></i>
    <div class="combo c-a"><span>无选择过滤器</span><b class="car big"></b></div>
    <svg class="qi faint"><use href="#filt"/></svg>
    <div class="combo c-b"><span>整个装配</span><b class="car big"></b></div>
    <div class="qsel"><svg class="qi"><use href="#orcube2"/></svg></div>
    <svg class="qi faint" viewBox="0 0 34 34"><g fill="none" stroke="#bbb" stroke-width="1.300"><circle cx="13" cy="12" r="7"/><path d="M13 1V23M2 12H24"/><ellipse cx="22" cy="24" rx="8" ry="5" transform="rotate(-45 22 24)"/><ellipse cx="14" cy="29" rx="6" ry="4" transform="rotate(-45 14 29)"/></g></svg>
    <svg class="qi" viewBox="0 0 34 34"><path d="M2 2H28L17 14V30" fill="none" stroke="#444"/><ellipse cx="15" cy="3" rx="13" ry="2" fill="#fff" stroke="#444"/><rect x="16" y="12" width="15" height="21" fill="#fff" stroke="#222"/><path d="M19 17H22M25 17H28M19 22H22M25 22H28M19 27H22M25 27H28" stroke="#222"/></svg>
    <b class="car dk cq"></b>
    <svg class="qi faint m1" viewBox="0 0 34 34"><path d="M6 2H2V24H6M24 2H28V10M15 2V24M4 13H26" fill="none" stroke="#bbb"/><circle cx="15" cy="13" r="5" fill="none" stroke="#bbb"/><path d="M24 24 18 28 24 32M18 28H28C32 28 32 34 28 34" fill="none" stroke="#999"/></svg>
    <svg class="qi m2" viewBox="0 0 34 34"><path d="M2 10 14 2 26 10V22L14 30 2 22zM2 10 14 16 26 10M14 16V30" fill="none" stroke="#e8842a" stroke-width="1.300"/><circle cx="25" cy="24" r="6" fill="#fff" stroke="#111"/><path d="M25 15V33M17 24H33" stroke="#111"/></svg>
    <svg class="qi m3" viewBox="0 0 34 34"><path d="M2 2H24V22H2z" fill="none" stroke="#e8842a" stroke-width="1.300"/><circle cx="24" cy="24" r="6" fill="#fff" stroke="#111"/><path d="M24 15V33M16 24H32" stroke="#111"/></svg>
    <b class="car dk cq"></b>
    <svg class="qi m4" viewBox="0 0 34 34"><path d="M17 1 32 10V25L17 33 2 25V10z" fill="url(#gA)" stroke="#bbb"/><path d="M2 10 17 19 32 10" fill="none" stroke="#bbb"/><path d="M17 18 30 28" stroke="#e8842a" stroke-width="1.300"/></svg>
    <svg class="qi m5" viewBox="0 0 34 34"><path d="M2 9C2 3 32 3 32 9V27C32 33 2 33 2 27z" fill="url(#gA)" stroke="#bbb"/><path d="M2 9 17 0 32 9M17 14 32 28V9" fill="none" stroke="#e8842a" stroke-width="1.300"/></svg>
    <i class="vsep v2"></i>
    <b class="car dk qbar-end"></b>
  </section>

  <main class="main">
    <aside class="lstrip">
      <svg class="ls gearico"><use href="#gearl"/></svg>
      <svg class="ls m23"><use href="#blocks"/></svg>
      <svg class="ls m21"><use href="#assem"/></svg>
      <div class="lstab"><svg class="ls"><use href="#bracket"/></svg></div>
      <svg class="ls m6"><use href="#books"/></svg>
      <svg class="ls m17"><use href="#bracketd"/></svg>
      <svg class="ls m18"><use href="#brmag"/></svg>
      <svg class="ls m32"><use href="#info"/></svg>
      <svg class="ls m21"><use href="#globe"/></svg>
      <svg class="ls m28"><use href="#clock"/></svg>
      <svg class="ls m17"><use href="#rainbow"/></svg>
      <svg class="ls m17"><use href="#wand"/></svg>
      <svg class="ls m15"><use href="#tools"/></svg>
    </aside>

    <section class="nav">
      <div class="nav-title"><span>部件导航器</span><svg class="maxi" viewBox="0 0 16 16"><path d="M.5 1.500H15.500V15H.5z" fill="none" stroke="#333"/><path d="M.5 2H15.500" stroke="#333" stroke-width="2"/></svg></div>
      <div class="table">
        <div class="thead">
          <div class="th c1c">名称<b class="sorter"></b></div><div class="th c2c">当..</div><div class="th c3c">最..</div><div class="th c4c">附注</div>
        </div>
        <div class="tbody">
          <svg class="tlines" viewBox="0 0 420 340"><path d="M14 14V126M14 14H26M14 42H22M14 70H22M14 98H22M38 126V322M38 154H50M38 182H50M38 210H50M38 238H50M38 266H50M38 294H50M38 322H50" fill="none" stroke="#999" stroke-dasharray="1 2"/></svg>
          <div class="tr"><div class="td c1c p-a"><svg class="ti lead"><use href="#clock"/></svg><span>历史记录建模模式</span></div><div class="td c2c"></div><div class="td c3c"></div><div class="td c4c"></div></div>
          <div class="tr"><div class="td c1c"><b class="exp">+</b><svg class="ti lead l2"><use href="#viewi"/></svg><span>模型视图</span></div><div class="td c2c"></div><div class="td c3c"></div><div class="td c4c"></div></div>
          <div class="tr"><div class="td c1c"><b class="exp">+</b><svg class="ti ck l2"><use href="#check"/></svg><svg class="ti"><use href="#cam"/></svg><span class="tx2">摄像机</span></div><div class="td c2c"></div><div class="td c3c"></div><div class="td c4c"></div></div>
          <div class="tr"><div class="td c1c"><b class="exp">−</b><svg class="ti ck l2"><use href="#ball"/></svg><svg class="ti"><use href="#hist"/></svg><span class="tx2">模型历史记录</span></div><div class="td c2c"></div><div class="td c3c"><svg class="ok"><use href="#check"/></svg></div><div class="td c4c"></div></div>
          <div class="tr"><div class="td c1c p-c"><svg class="ti"><use href="#eye"/></svg><svg class="ti"><use href="#csys"/></svg><span>基准坐标系 (0)</span></div><div class="td c2c"></div><div class="td c3c"><svg class="ok"><use href="#check"/></svg></div><div class="td c4c"></div></div>
          <div class="tr"><div class="td c1c p-c"><svg class="ti"><use href="#eye"/></svg><svg class="ti"><use href="#sketch"/></svg><span>草图 (1) "SKETCH_000"</span></div><div class="td c2c"></div><div class="td c3c"><svg class="ok"><use href="#check"/></svg></div><div class="td c4c"></div></div>
          <div class="tr"><div class="td c1c p-c"><svg class="ti"><use href="#eye"/></svg><svg class="ti"><use href="#sketch"/></svg><span>草图 (2) "SKETCH_001"</span></div><div class="td c2c"></div><div class="td c3c"><svg class="ok"><use href="#check"/></svg></div><div class="td c4c"></div></div>
          <div class="tr"><div class="td c1c p-c"><svg class="ti"><use href="#eye"/></svg><svg class="ti"><use href="#extrude"/></svg><span>拉伸 (3)</span></div><div class="td c2c"></div><div class="td c3c"><svg class="ok"><use href="#check"/></svg></div><div class="td c4c"></div></div>
          <div class="tr"><div class="td c1c p-c dim"><svg class="ti"><use href="#eyeoff"/></svg><svg class="ti"><use href="#extrude"/></svg><span>拉伸 (4)</span></div><div class="td c2c"></div><div class="td c3c"><svg class="ok"><use href="#check"/></svg></div><div class="td c4c"></div></div>
          <div class="tr"><div class="td c1c p-c"><svg class="ti"><use href="#eye"/></svg><svg class="ti"><use href="#trim"/></svg><span>修剪体 (5)</span></div><div class="td c2c"></div><div class="td c3c"><svg class="ok"><use href="#check"/></svg></div><div class="td c4c"></div></div>
          <div class="tr"><div class="td c1c p-c"><svg class="ti"><use href="#eye"/></svg><svg class="ti"><use href="#extrude"/></svg><span>拉伸 (6)</span></div><div class="td c2c"></div><div class="td c3c"><svg class="ok"><use href="#check"/></svg></div><div class="td c4c"></div></div>
          <div class="tr"><div class="td c1c p-c"><svg class="ti"><use href="#eye"/></svg><svg class="ti"><use href="#extrude"/></svg><span class="cur">拉伸 (7)</span></div><div class="td c2c tsk"><svg class="tski"><use href="#tsk"/></svg></div><div class="td c3c"><svg class="ok"><use href="#check"/></svg></div><div class="td c4c"></div></div>
          <div class="fill"></div>
        </div>
        <div class="hscroll"><b class="arr l"></b><i class="thumb"></i><b class="arr r"></b></div>
      </div>
      <div class="split"></div>
      <div class="acc"><b class="tri"></b>搜索</div>
      <div class="acc"><b class="tri"></b>相关性</div>
      <div class="acc"><b class="tri"></b>细节</div>
      <div class="acc"><b class="tri"></b>预览</div>
    </section>

    <section class="graphics">
      <div class="tabs">
        <div class="tab t-disc"><svg class="tabico" viewBox="0 0 20 20"><rect x="2" y="3" width="13" height="15" fill="#fff" stroke="#555"/><circle cx="13" cy="3" r="3" fill="#e01f2f"/><circle cx="8" cy="11" r="4" fill="none" stroke="#777"/></svg>发现中心</div>
        <div class="tab t-act"><svg class="tabico" viewBox="0 0 20 20"><path d="M2 12 7 4 11 3V10L18 14 10 18 2 15z" fill="#ddd" stroke="#666"/></svg>_model1.prt<svg class="tabx" viewBox="0 0 16 16"><path d="M12 9V14H2V3H7M9 2H14V7M14 2 8 8" fill="none" stroke="#fff" stroke-width="1.500"/></svg><svg class="tabc" viewBox="0 0 12 12"><path d="M2 2 10 10M10 2 2 10" stroke="#fff" stroke-width="1.700"/></svg></div>
      </div>
      <div class="canvas">
        <svg class="model" viewBox="490 292 2023 1220">
          <g fill="none" stroke="#3a66ff" stroke-width="2">
            <path d="M1454 844 1629 782 1789 771" stroke-width="2.200"/>
            <path d="M1789 771 1788 820" stroke-width="1.500"/>
          </g>
          <path d="M1030 993 1065 1072 1061 1194 1026 1115z" fill="#ab6800"/>
          <path d="M1065 1072 1330 1008 1854 1024 1848 1217 1061 1194z" fill="#dc8504"/>
          <path d="M1330 1008 1831 972 1854 1024z" fill="#ffa200"/>
          <path d="M1673 887 1835 875 1831 972 1330 1008z" fill="#e68e0b"/>
          <path d="M1030 993 1249 917 1272 969 1481 895 1652 835 1673 887 1330 1008 1065 1072z" fill="#ff9c00"/>
          <path d="M1652 835 1812 823 1835 875 1673 887z" fill="#ffa500"/>
          <path d="M1250 858 1789 819 1790 825 1652 835 1481 895 1273 911z" fill="#ffa600"/>
          <path d="M1273 911 1481 895 1272 969z" fill="#e68e0b"/>
          <path d="M1250 858 1273 911 1272 969 1249 917z" fill="#ab6800"/>
          <g fill="none" stroke="#3b3b3b" stroke-width="1.200">
            <path d="M1250 858 1789 819M1250 858 1273 911 1272 969 1249 917 1250 858M1273 911 1481 895M1272 969 1652 835 1812 823 1835 875 1831 972M1652 835 1673 887 1835 875M1673 887 1330 1008 1065 1072 1030 993M1065 1072 1061 1194M1330 1008 1831 972 1854 1024 1848 1217M1330 1008 1854 1024"/>
          </g>
          <g fill="none" stroke="#3a66ff" stroke-width="2.200">
            <path d="M1030 993 1249 917M1061 1194 1848 1217M1026 1115 1061 1194"/>
          </g>
          <g fill="none" stroke="#1a1ae6" stroke-width="1.300">
            <path d="M1030 997 1026 1115M1026 1115 998 1050M1014 1025 1013 1083 1026 1083M1014 1025 1029 1055"/>
            <path d="M1020 1116H1032M1026 1110V1122" stroke-width="2"/>
          </g>
          <path d="M1031 1000 1028 1020 1033 1020z" fill="#0a1a8a"/>
          <path d="M998 1048 1000 1062 1005 1058z" fill="#0a1a8a"/>
          <g fill="none" stroke="#ddd" stroke-width="1.300">
            <path d="M1029 1057 1094 1052 1092 1110M1029 1083 1078 1079 1092 1110M1026 1116 1144 1107"/>
          </g>
          <path d="M1140 1103 1156 1106 1142 1111z" fill="#ccc" stroke="#aaa"/>
          <g font-family="Liberation Sans" font-size="15">
            <text x="1024" y="996" fill="#1a1ae6">Z</text>
            <text x="993" y="1054" fill="#1a1ae6">Y</text>
            <text x="1159" y="1111" fill="#aaa">X</text>
          </g>
          <path d="M571 1373 612 1370 621 1391 582 1393zM571 1373 570 1410 579 1431 582 1393M621 1391 620 1427 579 1431" fill="#fff" stroke="#bbb" stroke-width="1.200"/>
          <path d="M576 1372 583 1369 579 1361z" fill="#4caf50"/>
          <rect x="595" y="1352" width="5" height="32" fill="#0a3fbf"/>
          <path d="M597 1335 605 1356H590z" fill="#0a3fbf"/>
          <path d="M621 1396 655 1393 655 1390 668 1394 655 1399 655 1397 622 1401z" fill="#dd2e2e"/>
          <g font-family="Liberation Sans" font-size="12">
            <text x="595" y="1336" fill="#2447b8">Z</text>
            <text x="575" y="1366" fill="#4caf50">Y</text>
            <text x="672" y="1399" fill="#dd2e2e">X</text>
          </g>
        </svg>
      </div>
    </section>

    <aside class="rstrip">
      <svg><use href="#mirror"/></svg>
      <svg viewBox="0 0 34 34"><path d="M1 17C8 6 26 6 33 17 26 28 8 28 1 17z" fill="none" stroke="#333"/><circle cx="17" cy="17" r="8" fill="none" stroke="#333"/><path d="M2 32 31 3" stroke="#333"/></svg>
      <svg><use href="#replace"/></svg>
      <svg><use href="#unite"/></svg>
      <svg><use href="#extrude"/></svg>
      <svg viewBox="0 0 34 34"><circle cx="17" cy="17" r="15.500" fill="none" stroke="#1fb4d8" stroke-width="1.300"/></svg>
      <svg viewBox="0 0 48 48"><use href="#pad"/><path d="M26 40C32 42 36 36 38 32L42 26 46 30 46 34 40 38 34 44C30 48 26 46 26 40z" fill="#fff" stroke="#111"/></svg>
      <svg viewBox="0 0 34 34"><path d="M1 33 33 1" stroke="#1fb4d8" stroke-width="1.300"/></svg>
      <svg viewBox="0 0 34 34"><path d="M9 6H19L27 20 19 28 1 20z" fill="#fff" stroke="#333"/><path d="M14 6V2M9 6 10 24M19 6 18 26" fill="none" stroke="#333"/><rect x="11" y="22" width="22" height="11" rx="5.500" fill="#17c017" stroke="#0a6a0a"/><circle cx="27" cy="27.500" r="4" fill="#ccc" stroke="#444"/></svg>
      <svg viewBox="0 0 48 48"><use href="#trim"/></svg>
      <i class="rsep"></i>
      <b class="car dk rs-end"></b>
    </aside>
  </main>

  <footer class="status">选择对象并使用 MB3，或者双击某一对象</footer>

  <div class="taskbar">
    <svg class="start" viewBox="0 0 26 26"><path d="M1 4 11 2.500V12H1zM13 2 25 .5V12H13zM1 14H11V23.500L1 22zM13 14H25V25.500L13 24z" fill="#fff"/></svg>
    <div class="tsearch">
      <svg class="tsmag" viewBox="0 0 24 38"><circle cx="15" cy="12" r="9" fill="none" stroke="#222" stroke-width="1.400"/><path d="M8 19 1 35" stroke="#222" stroke-width="1.400"/></svg>
      <span>搜索</span>
      <svg class="flowers" viewBox="0 0 100 60"><g stroke="#6b8f3a" fill="none"><path d="M16 60 12 20M30 60 28 14M44 60 44 30M56 60 58 30"/></g><g fill="#8d6bbd"><ellipse cx="12" cy="32" rx="4" ry="13"/><ellipse cx="22" cy="42" rx="4" ry="13"/><ellipse cx="28" cy="20" rx="4" ry="14"/><ellipse cx="32" cy="38" rx="4" ry="13"/><ellipse cx="44" cy="30" rx="4" ry="12"/><ellipse cx="54" cy="44" rx="4" ry="12"/></g><circle cx="47" cy="20" r="14" fill="#f7b52c"/><circle cx="47" cy="20" r="5" fill="#b5651d"/><circle cx="66" cy="44" r="17" fill="#f6a521"/><circle cx="66" cy="44" r="6" fill="#c46a17"/><ellipse cx="88" cy="14" rx="7" ry="12" fill="#f4b82e" transform="rotate(20 88 14)"/></svg>
    </div>
    <svg class="ti-task tv" viewBox="0 0 28 36"><path d="M2 4H17M2 32H17M2 10H17V26H2zM23 2V12M23 24V34" fill="none" stroke="#fff" stroke-width="1.400"/><rect x="22" y="16" width="3" height="4" fill="#fff"/></svg>
    <svg class="ti-task t-mail" viewBox="0 0 38 36"><path d="M1 12 19 1 37 12V35H1z" fill="#1fa3e8"/><path d="M1 12 19 1 37 12 19 23z" fill="#0b62b0"/><path d="M6 10H32V16L19 24 6 16z" fill="#fff"/><path d="M37 35 19 23 37 12z" fill="#12c7f0"/></svg>
    <svg class="ti-task t-store" viewBox="0 0 36 40"><path d="M10 8V3H26V8" fill="none" stroke="#2aa5e0" stroke-width="2"/><rect x="1" y="8" width="34" height="32" rx="3" fill="#eee"/><rect x="10" y="14" width="7" height="7" fill="#f25022"/><rect x="19" y="14" width="7" height="7" fill="#7fba00"/><rect x="10" y="23" width="7" height="7" fill="#00a4ef"/><rect x="19" y="23" width="7" height="7" fill="#ffb900"/></svg>
    <svg class="ti-task t-fold" viewBox="0 0 34 38"><path d="M1 3H14L17 7H33V35H1z" fill="#f6c84c"/><path d="M1 8H33V35H1z" fill="#fcd86a"/><path d="M10 35V24C10 21 24 21 24 24V35z" fill="#3a8cd8"/><rect x="14" y="28" width="6" height="7" fill="#f6c84c"/></svg>
    <svg class="ti-task t-cad" viewBox="0 0 32 44"><path d="M2 2 26 1 30 6V32H2z" fill="#e5174f"/><path d="M6 32H30V44H6z" fill="#7d0d2c"/><text x="16" y="22" font-size="17" font-weight="700" text-anchor="middle" fill="#fff" font-family="Liberation Sans">A</text><text x="18" y="41" font-size="7" text-anchor="middle" fill="#fff" font-family="Liberation Sans">CAD</text></svg>
    <svg class="ti-task t-edge" viewBox="0 0 36 40"><circle cx="18" cy="20" r="17" fill="#0f7fc9"/><path d="M5 15C10 2 32 2 34 20 34 30 20 30 20 22 20 14 8 10 5 15z" fill="#47d27f"/><path d="M8 22C8 32 18 38 28 34 18 36 14 24 20 18 14 14 8 16 8 22z" fill="#0a4f90"/></svg>
    <div class="t-nx"><svg viewBox="0 0 36 44"><rect x="1" y="3" width="32" height="36" fill="#14a0a0"/><rect x="5" y="0" width="26" height="38" fill="#8a1a12"/><text x="18" y="26" font-size="15" font-weight="700" text-anchor="middle" fill="#fff" font-family="Liberation Sans">NX</text></svg></div>
    <svg class="ti-task t-play" viewBox="0 0 32 40"><path d="M3 3 25 1V39L3 37z" fill="#6db8e8"/><path d="M7 6 29 4V36L7 34z" fill="#f08a1d" stroke="#bcdcf4" stroke-width="2"/><path d="M14 13 24 20 14 27z" fill="#fff"/></svg>
    <i class="bar b-a"></i><i class="bar b-n"></i><i class="bar b-p"></i>

    <div class="tray">
      <svg class="tr1" viewBox="0 0 16 10"><path d="M1 9 8 1 15 9" fill="none" stroke="#fff" stroke-width="1.200"/></svg>
      <svg class="tr2" viewBox="0 0 26 16"><path d="M8 3H24V14H8z" fill="none" stroke="#fff" stroke-width="1.200"/><path d="M12 5H23V12H12z" fill="#fff"/><path d="M2 2V6M6 2V6M1 6H7V9C7 12 1 12 1 9z" fill="#1c1c1c" stroke="#fff"/></svg>
      <svg class="tr3" viewBox="0 0 22 22"><path d="M2 20C2 10 10 2 20 2M6 20C6 12 12 6 20 6M10 20C10 15 14 10 20 10" fill="none" stroke="#aaa" stroke-width="1.200"/><circle cx="18" cy="19" r="2" fill="#fff"/></svg>
      <svg class="tr4" viewBox="0 0 24 20"><path d="M1 7H6L12 2V18L6 13H1z" fill="none" stroke="#fff" stroke-width="1.200"/><path d="M15 7C17 9 17 11 15 13M19 3C23 8 23 12 19 17" fill="none" stroke="#999"/></svg>
      <span class="ime">中</span>
      <div class="clock"><span class="cl-t">20:01</span><span class="cl-d">2024/5/26</span></div>
      <svg class="note" viewBox="0 0 26 26"><path d="M1 1H25V20H16L13 24 10 20H1z" fill="none" stroke="#fff" stroke-width="1.200"/></svg>
      <span class="wm">UG爱好者论坛@那一丝忧伤</span>
    </div>
  </div>
</div>
</body>
</html>
```

FILE: styles.css
```css
* { box-sizing: border-box; }
html, body { margin: 0; padding: 0; }
body { font-family: "Liberation Sans", "Noto Sans CJK SC", sans-serif; color: #222; background: #fff; overflow: hidden; }
.defs { position: absolute; width: 0; height: 0; }
.app { width: 2560px; height: 1600px; display: flex; flex-direction: column; overflow: hidden; }
svg { display: block; flex: none; overflow: visible; }
.car { display: inline-block; width: 0; height: 0; border-left: 4px solid transparent; border-right: 4px solid transparent; border-top: 5px solid #fff; flex: none; }
.car.dk { border-top-color: #222; }
.car.big { border-left-width: 6px; border-right-width: 6px; border-top: 8px solid #222; }

/* title */
.top { height: 80px; background: linear-gradient(90deg, #02668e, #0678a5); color: #fff; position: relative; }
.top-strip { position: absolute; left: 1099px; top: 0; display: flex; height: 2px; }
.top-strip .s1 { width: 72px; background: #0f4f9e; }
.top-strip .s2 { width: 290px; background: #e4e4e4; }
.title-row { height: 38px; position: relative; display: flex; align-items: center; padding-left: 4px; }
.nx { font: 700 27px/1 "Liberation Sans Narrow", "Liberation Sans", sans-serif; width: 40px; letter-spacing: -1px; }
.q { height: 28px; width: 24px; }
.qs { width: 1px; height: 28px; background: #3c8eae; flex: none; margin-left: 8px; }
.q1 { margin-left: 16px; }
.q2 { margin-left: 7px; }
.q3 { margin-left: 10px; }
.q4 { margin-left: 11px; }
.q5 { margin-left: 16px; }
.q6 { margin-left: 11px; }
.q7 { margin-left: 10px; }
.q8 { margin-left: 11px; }
.qs2 { margin-left: 8px; }
.q9 { margin-left: 6px; width: 26px; }
.q10 { margin-left: 8px; }
.qs3 { margin-left: 8px; }
.q11 { margin-left: 8px; height: 30px; }
.qs4 { margin-left: 11px; }
.q12 { margin-left: 4px; width: 26px; }
.qs5 { margin-left: 6px; }
.q13 { margin-left: 6px; width: 26px; height: 30px; }
.q14 { margin-left: 10px; width: 26px; height: 30px; }
.qtext { font-size: 17px; margin-left: 3px; }
.q15 { margin-left: 3px; }
.q16 { margin-left: 12px; }
.car-line { box-shadow: 0 -3px 0 -1px #fff; }
.apptitle { position: absolute; left: 1445px; font-size: 18px; top: 5px; }
.siemens { position: absolute; left: 2355px; top: 9px; font-size: 17px; font-weight: 700; letter-spacing: .3px; }
.winbtns { position: absolute; left: 2463px; top: 11px; display: flex; gap: 19px; }
.winbtns svg { width: 16px; height: 16px; }
.menu-row { height: 42px; display: flex; align-items: flex-start; position: relative; font-size: 21px; }
.mi { height: 40px; line-height: 41px; padding: 0 16px; color: #fff; flex: none; border-bottom: 2px solid transparent; }
.mi.file { padding: 0 0 0 22px; width: 116px; }
.mi.active { color: #f7c65a; border-bottom-color: #f9c84a; }
.search { position: absolute; left: 2106px; top: 5px; width: 262px; height: 28px; background: #fff; border: 1px solid #999; display: flex; align-items: center; justify-content: space-between; padding-right: 3px; }
.ph { color: #aaa; font-size: 17px; line-height: 27px; }
.mag { width: 18px; height: 20px; }
.tb { position: absolute; top: 3px; width: 34px; height: 32px; }
.b1 { left: 2382px; }
.b2 { left: 2427px; }
.b3 { left: 2472px; }
.b4 { left: 2519px; }

/* ribbon */
.ribbon { height: 132px; display: flex; position: relative; background: #fff; border-bottom: 2px solid #ddd; font-size: 17px; }
.grp { display: flex; flex-direction: column; flex: none; position: relative; border-right: 1px solid #ddd; margin-top: 5px; }
.g1 { width: 157px; } .g2 { width: 766px; } .g3 { width: 408px; } .g4 { width: 149px; } .g5 { width: 76px; } .g6 { width: 82px; } .g7 { width: 77px; } .g8 { width: 155px; } .g9 { width: 42px; } .g10 { width: 423px; }
.body { flex: 1; display: flex; min-height: 0; }
.pl14 { padding-left: 14px; } .pl9 { padding-left: 9px; } .pl7 { padding-left: 7px; }
.foot { height: 26px; line-height: 28px; text-align: center; padding-right: 24px; color: #0a7099; white-space: nowrap; font-size: 17px; position: relative; }
.foot.clip { padding-right: 20px; overflow: hidden; }
.fa { position: absolute; right: 10px; top: 11px; }
.lb { width: 60px; display: flex; flex-direction: column; align-items: center; flex: none; white-space: nowrap; }
.lb span { line-height: 24px; margin-top: 3px; }
.lb .car { margin-top: 5px; }
.w58 { width: 58px; } .w59 { width: 59px; } .w62 { width: 62px; } .w64 { width: 64px; } .w68 { width: 68px; } .w70 { width: 70px; }
.li { width: 48px; height: 50px; }
.ml7 { margin-left: 7px; } .ml5 { margin-left: 5px; }
.sc { display: flex; flex-direction: column; flex: none; }
.w81 { width: 81px; } .w118 { width: 118px; } .w147 { width: 147px; }
.si { height: 50px; display: flex; align-items: center; gap: 5px; white-space: nowrap; }
.w81 .si { gap: 3px; }
.mi32 { width: 34px; height: 36px; }
.sg { flex: 1; display: grid; grid-auto-rows: 42px; align-items: center; justify-items: center; padding-top: 4px; align-content: start; }
.sg svg { width: 30px; height: 36px; }
.c-std { grid-template-columns: 34px 34px 36px 40px; padding-left: 4px; }
.c2 { grid-template-columns: 34px 34px; padding-left: 5px; }
.c4 { grid-template-columns: repeat(4, 34px); padding-left: 4px; }
.c1 { grid-template-columns: 34px; padding-left: 4px; }
.c-dim { grid-template-columns: 34px 42px repeat(10, 34px); padding-left: 4px; }
.sl { border-left: 1px solid #ddd; padding-left: 4px; justify-self: stretch; width: auto !important; }
.dm { font-family: "Liberation Sans", sans-serif; display: flex; flex-direction: column; align-items: center; font-size: 9px; line-height: 8px; white-space: nowrap; }
.dm b { font-weight: 400; font-size: 13px; line-height: 15px; color: #111; letter-spacing: -1px; }
.dm i { font-style: normal; letter-spacing: -.2px; }
.dm .r { color: #a81c1c; font-weight: 700; }
.dm .g { color: #999; font-weight: 700; }
.dm .u { text-decoration: underline; }
.dm.xx { font-size: 14px; line-height: 18px; font-weight: 700; color: #111; letter-spacing: -1.5px; }
.dm.xx em { color: #a81c1c; font-style: normal; }
.boxed { border: 1px solid #8a1010; padding: 0 2px 0 1px; line-height: 15px; display: block; }
.dm.sl { height: 36px; justify-content: center; padding-left: 6px; }
.dm.bl, .dm.bl b { color: #1616c8; }
.dm.bl i { font-size: 8px; letter-spacing: -.3px; }
.dm.one { font-size: 13px; line-height: 14px; letter-spacing: -1.5px; }
.ribbon-end { position: absolute; left: 2544px; top: 116px; }

/* quick bar */
.qbar { height: 45px; display: flex; align-items: center; border-bottom: 2px solid #aaa; padding-left: 18px; position: relative; font-size: 17px; flex: none; }
.burger { width: 18px; height: 20px; }
.qlabel { margin-left: 11px; letter-spacing: .3px; }
.qbar > .car { margin-left: 4px; }
.vsep { width: 1px; height: 34px; background: #ddd; margin-left: 11px; flex: none; }
.combo { height: 30px; border: 1px solid #666; display: flex; align-items: center; justify-content: space-between; padding: 0 6px 0 1px; flex: none; }
.c-a { width: 225px; margin-left: 17px; }
.c-b { width: 237px; margin-left: 10px; }
.qi { width: 34px; height: 34px; flex: none; }
.faint { margin-left: 11px; }
.qsel { width: 41px; height: 39px; background: #c8e3ec; border: 1px solid #b3d5e0; margin-left: 9px; display: flex; align-items: center; justify-content: center; flex: none; }
.qsel .qi { width: 34px; height: 36px; }
.qsel + .faint { margin-left: 5px; }
.faint + .qi { margin-left: 14px; }
.cq { margin-left: 3px !important; }
.m1 { margin-left: 13px; }
.m2 { margin-left: 3px; }
.m3 { margin-left: 12px; }
.m4 { margin-left: 16px; }
.m5 { margin-left: 9px; }
.v2 { margin-left: 14px; }
.qbar-end { position: absolute; left: 2544px; top: 27px; }

/* main */
.main { flex: 1; display: flex; min-height: 0; }
.lstrip { width: 56px; background: #dcdcdc; border-right: 2px solid #aaa; display: flex; flex-direction: column; align-items: center; flex: none; padding-left: 4px; }
.ls { width: 47px; height: 50px; }
.gearico { width: 40px; height: 42px; margin-left: -4px; }
.lstab { width: 54px; height: 68px; background: #fff; margin: 3px 0 0 -2px; border: 1px solid #bbb; border-right: 0; display: flex; align-items: center; justify-content: center; flex: none; }
.m6 { margin-top: 6px; } .m15 { margin-top: 15px; } .m17 { margin-top: 17px; } .m18 { margin-top: 18px; } .m21 { margin-top: 21px; } .m23 { margin-top: 23px; } .m28 { margin-top: 28px; } .m32 { margin-top: 32px; }
.nav { width: 434px; flex: none; border-right: 2px solid #aaa; padding: 0 9px 0 6px; display: flex; flex-direction: column; font-size: 18px; }
.nav-title { height: 36px; display: flex; align-items: center; justify-content: space-between; padding: 0 7px 0 4px; flex: none; }
.maxi { width: 16px; height: 16px; }
.table { flex: 1; min-height: 0; border: 1px solid #ddd; display: flex; flex-direction: column; }
.thead { height: 27px; background: #f0f0f0; display: flex; flex: none; border-bottom: 2px solid #ddd; }
.th { line-height: 27px; padding-left: 6px; border-right: 2px solid #e4e4e4; white-space: nowrap; overflow: hidden; flex: none; }
.c1c { width: 300px; } .c2c { width: 36px; } .c3c { width: 36px; } .c4c { width: 43px; border-right: 0; }
.sorter { display: inline-block; width: 0; height: 0; border-left: 7px solid transparent; border-right: 7px solid transparent; border-bottom: 7px solid #222; margin-left: 18px; vertical-align: 3px; }
.tbody { flex: 1; min-height: 0; overflow: hidden; position: relative; display: flex; flex-direction: column; }
.tlines { position: absolute; left: 0; top: 0; width: 420px; height: 340px; }
.tr { height: 28px; display: flex; flex: none; border-bottom: 1px solid #eee; }
.tr:nth-child(odd) { background: #fafafa; }
.td { height: 27px; display: flex; align-items: center; border-right: 2px solid #ececec; white-space: nowrap; flex: none; position: relative; }
.td.c4c { border-right: 0; }
.td span { margin-top: -1px; }
.p-a { padding-left: 25px; }
.p-c { padding-left: 48px; }
.exp { width: 11px; height: 11px; margin-left: 8px; border: 1px solid #bbb; background: #fff; font-weight: 400; font-size: 12px; line-height: 9px; text-align: center; font-family: "Liberation Sans", sans-serif; flex: none; position: relative; }
.ti { width: 24px; height: 24px; }
.lead { margin-right: 3px; }
.l2 { margin-left: 6px; }
.ck { margin-right: 1px; }
.td .tx2 { margin-left: 2px; }
.p-c span { margin-left: 3px; }
.dim span { color: #aaa; }
.cur { font-weight: 700; }
.ok { width: 22px; height: 22px; margin-left: 6px; }
.tski { width: 9px; height: 16px; margin-left: 12px; }
.fill { flex: 1; background:
  linear-gradient(90deg, transparent 300px, #ececec 300px, #ececec 302px, transparent 302px, transparent 336px, #ececec 336px, #ececec 338px, transparent 338px, transparent 372px, #ececec 372px, #ececec 374px, transparent 374px),
  repeating-linear-gradient(180deg, #fff 0, #fff 27px, #eee 27px, #eee 28px, #fafafa 28px, #fafafa 55px, #eee 55px, #eee 56px); }
.hscroll { height: 24px; background: #f0f0f0; display: flex; align-items: center; flex: none; position: relative; padding-left: 27px; }
.thumb { width: 285px; height: 24px; background: #cacaca; display: block; }
.arr { position: absolute; width: 8px; height: 8px; border-left: 2px solid #444; border-bottom: 2px solid #444; top: 8px; }
.arr.l { left: 10px; transform: rotate(45deg); }
.arr.r { right: 10px; transform: rotate(225deg); }
.split { height: 7px; border: 1px solid #bbb; border-top-color: #999; border-bottom: 3px solid #aaa; margin-top: 2px; background: #eee; flex: none; }
.acc { height: 32px; border-bottom: 3px solid #ccc; color: #0a7099; font-size: 22px; line-height: 30px; padding-left: 32px; position: relative; flex: none; }
.tri { position: absolute; left: 13px; top: 8px; width: 0; height: 0; border-top: 7px solid transparent; border-bottom: 7px solid transparent; border-left: 7px solid #0a7099; }
.nav > .acc:last-child { margin-bottom: 5px; }
.graphics { flex: 1; display: flex; flex-direction: column; min-width: 0; }
.tabs { height: 35px; display: flex; flex: none; border-bottom: 3px solid #04648b; }
.tab { display: flex; align-items: center; height: 32px; font-size: 18px; white-space: nowrap; flex: none; }
.t-disc { width: 130px; padding-left: 5px; gap: 4px; margin-left: 5px; }
.t-act { width: 192px; background: #04648b; color: #fff; padding-left: 6px; gap: 5px; font-size: 19.5px; }
.tabico { width: 20px; height: 20px; }
.tabx { width: 16px; height: 16px; margin-left: 6px; }
.tabc { width: 11px; height: 11px; margin-left: 10px; }
.canvas { flex: 1; position: relative; min-height: 0; }
.model { position: absolute; left: 0; top: 0; width: 2023px; height: 1220px; }
.rstrip { width: 47px; border-left: 2px solid #ddd; flex: none; display: flex; flex-direction: column; align-items: center; gap: 8px; padding-top: 11px; position: relative; }
.rstrip > svg { width: 34px; height: 34px; }
.rsep { width: 38px; height: 1px; background: #ddd; margin-top: 7px; }
.rs-end { position: absolute; left: 20px; bottom: 3px; }

.status { height: 28px; border-top: 2px solid #aaa; font-size: 17px; font-weight: 700; line-height: 25px; padding-left: 3px; white-space: nowrap; flex: none; color: #111; }

/* taskbar */
.taskbar { height: 59px; background: #1c1c1c; position: relative; display: flex; align-items: center; flex: none; }
.start { width: 26px; height: 26px; margin-left: 23px; }
.tsearch { width: 432px; height: 59px; margin-left: 23px; background: #f2f2f2; border: 2px solid #aaa; display: flex; align-items: center; padding-left: 16px; position: relative; font-size: 24px; flex: none; overflow: hidden; }
.tsmag { width: 24px; height: 38px; margin-right: 20px; }
.flowers { position: absolute; left: 322px; top: 0; width: 100px; height: 59px; }
.ti-task { height: 40px; width: 36px; }
.tv { margin-left: 20px; }
.t-mail { margin-left: 39px; }
.t-store { margin-left: 39px; }
.t-fold { margin-left: 39px; }
.t-cad { margin-left: 42px; height: 44px; width: 32px; }
.t-edge { margin-left: 41px; }
.t-nx { width: 73px; height: 59px; background: #4c4c4c; margin-left: 21px; display: flex; align-items: center; justify-content: center; flex: none; }
.t-nx svg { width: 36px; height: 44px; }
.t-play { margin-left: 17px; width: 32px; }
.bar { position: absolute; bottom: 0; height: 3px; background: #76b9ed; }
.b-a { left: 887px; width: 60px; } .b-n { left: 956px; width: 73px; } .b-p { left: 1037px; width: 60px; }
.tray { position: absolute; left: 2190px; top: 0; width: 370px; height: 59px; color: #fff; border-right: 2px solid #666; }
.tr1, .tr2, .tr3, .tr4, .note, .ime { position: absolute; }
.tr1 { left: 10px; top: 25px; width: 15px; height: 10px; }
.tr2 { left: 40px; top: 20px; width: 24px; height: 16px; }
.tr3 { left: 79px; top: 20px; width: 20px; height: 20px; }
.tr4 { left: 113px; top: 20px; width: 22px; height: 20px; }
.ime { left: 147px; top: 17px; font-size: 21px; line-height: 24px; font-weight: 700; }
.clock { position: absolute; left: 176px; top: 2px; width: 112px; display: flex; flex-direction: column; align-items: center; line-height: 27px; }
.cl-t { font-size: 18px; }
.cl-d { font-size: 20px; }
.note { left: 307px; top: 17px; width: 24px; height: 26px; }
.wm { position: absolute; left: 180px; top: 38px; font-size: 14px; color: #9a9a9a; white-space: nowrap; letter-spacing: .2px; opacity: .85; }
```
